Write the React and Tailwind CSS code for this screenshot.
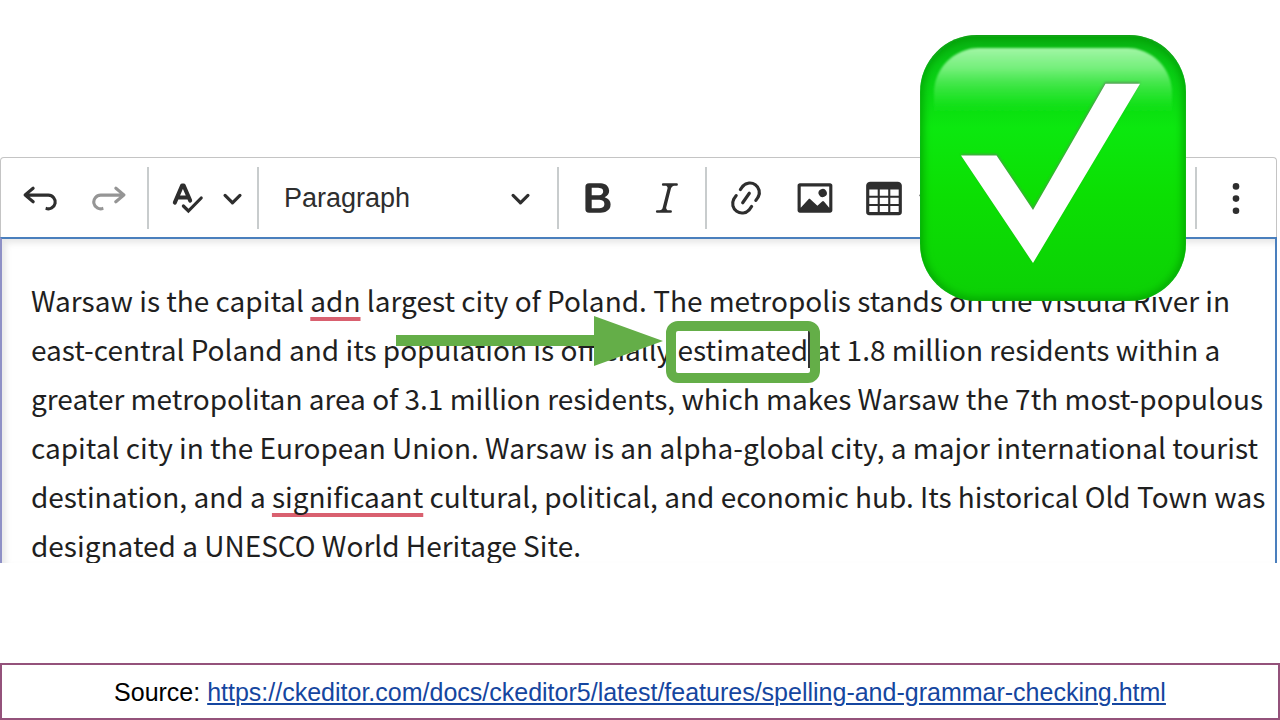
import React from "react";

const PATHS = {
  undo: "m5.042 9.367 2.189 1.837a.75.75 0 0 1-.965 1.149l-3.788-3.18a.747.747 0 0 1-.21-.284.75.75 0 0 1 .17-.945L6.23 4.762a.75.75 0 1 1 .964 1.15L4.863 7.866h8.917A.75.75 0 0 1 14 7.9a4 4 0 1 1-1.477 7.718l.344-1.489a2.5 2.5 0 1 0 1.094-4.73l.008-.032H5.042z",
  bold: "M10.187 17H5.773c-.637 0-1.092-.138-1.364-.415-.273-.277-.409-.718-.409-1.323V4.738c0-.617.14-1.062.419-1.332.279-.27.73-.406 1.354-.406h4.68c.69 0 1.288.041 1.793.124.506.083.96.242 1.36.477.341.197.644.447.906.75a3.262 3.262 0 0 1 .808 2.162c0 1.401-.722 2.426-2.167 3.075C15.05 10.175 16 11.315 16 13.01a3.756 3.756 0 0 1-2.296 3.504 6.1 6.1 0 0 1-1.517.377c-.571.073-1.238.11-2 .11zm-.217-6.217H7v4.087h3.069c1.977 0 2.965-.69 2.965-2.072 0-.707-.256-1.22-.768-1.537-.512-.319-1.277-.478-2.296-.478zM7 5.13v3.619h2.606c.729 0 1.292-.067 1.69-.2a1.6 1.6 0 0 0 .91-.765c.165-.267.247-.566.247-.897 0-.707-.26-1.176-.778-1.409-.519-.232-1.31-.348-2.375-.348H7z",
  italic: "m9.586 14.633.021.004c-.036.335.095.655.393.962.082.083.173.15.274.201h1.474a.6.6 0 1 1 0 1.2H5.304a.6.6 0 0 1 0-1.2h1.15c.474-.07.809-.182 1.005-.334.157-.122.291-.32.404-.597l2.416-9.55a1.053 1.053 0 0 0-.281-.823 1.12 1.12 0 0 0-.442-.296H8.15a.6.6 0 0 1 0-1.2h6.443a.6.6 0 1 1 0 1.2h-1.195c-.376.056-.65.155-.823.296-.215.175-.423.439-.623.79l-2.366 9.347z",
  link: "m11.077 15 .991-1.416a.75.75 0 1 1 1.229.86l-1.148 1.64a.748.748 0 0 1-.217.206 5.251 5.251 0 0 1-8.503-5.955.741.741 0 0 1 .12-.274l1.147-1.639a.75.75 0 1 1 1.228.86L4.933 10.7l.006.003a3.75 3.75 0 0 0 6.132 4.294l.006.004zm5.494-5.335a.748.748 0 0 1-.12.274l-1.147 1.639a.75.75 0 1 1-1.228-.86l.86-1.23a3.75 3.75 0 0 0-6.144-4.301l-.86 1.229a.75.75 0 0 1-1.229-.86l1.148-1.64a.748.748 0 0 1 .217-.206 5.251 5.251 0 0 1 8.503 5.955zm-4.563-2.532a.75.75 0 0 1 .184 1.045l-3.155 4.505a.75.75 0 1 1-1.229-.86l3.155-4.506a.75.75 0 0 1 1.045-.184z",
  image: "M6.91 10.54c.26-.23.64-.21.88.03l3.36 3.14 2.23-2.06a.64.64 0 0 1 .87 0l2.52 2.97V4.5H3.2v10.12l3.71-4.08zm10.27-7.51c.6 0 1.09.47 1.09 1.05v11.84c0 .59-.49 1.06-1.09 1.06H2.79c-.6 0-1.09-.47-1.09-1.06V4.08c0-.58.49-1.05 1.1-1.05h14.38zm-5.22 5.56a1.96 1.96 0 1 1 3.4-1.96 1.96 1.96 0 0 1-3.4 1.96z",
  table: "M3 6v2.9h4V6H3zm0 3.9v2.9h4V9.9H3zm0 3.9v2.9h4v-2.9H3zm5 0v2.9h4v-2.9H8zm5 0v2.9h4v-2.9h-4zm0-3.9v2.9h4V9.9h-4zm0-3.9v2.9h4V6h-4zM8 9.9v2.9h4V9.9H8zM8 6v2.9h4V6H8zM3.5 2.3h13c1 0 2 .7 2 1.7v12.7a1.5 1.5 0 0 1-1.5 1.5H3a1.5 1.5 0 0 1-1.5-1.5V4c0-1 1-1.7 2-1.7z",
};

function Icon({ name, flip }) {
  return (
    <svg viewBox="0 0 20 20" className="size-[42px] shrink-0" fill="currentColor" fillRule="evenodd" aria-hidden="true">
      <path d={PATHS[name]} transform={flip ? "translate(20 0) scale(-1 1)" : undefined} />
    </svg>
  );
}

function Chevron() {
  return (
    <svg viewBox="0 0 10 10" className="size-[21px] shrink-0" fill="currentColor" aria-hidden="true">
      <path d="M.941 4.523a.75.75 0 1 1 1.06-1.06l3.006 3.005 3.005-3.005a.75.75 0 1 1 1.06 1.06l-3.549 3.55a.75.75 0 0 1-1.168-.136L.941 4.523z" />
    </svg>
  );
}

function ToolButton({ label, children, disabled }) {
  return (
    <button
      type="button"
      aria-label={label}
      disabled={disabled}
      className="flex h-full w-[69px] shrink-0 items-center justify-center disabled:opacity-50"
    >
      {children}
    </button>
  );
}

function Separator() {
  return <span className="mx-1 h-[62px] w-[2px] shrink-0 bg-[#c8cccd]" />;
}

function Toolbar() {
  return (
    <div role="toolbar" aria-label="Editor toolbar" className="flex h-[80px] items-center rounded-t-[4px] border border-b-0 border-[#c4c4c4] pl-1 pr-[6px] text-[#2e2e2e]">
      <ToolButton label="Undo"><Icon name="undo" /></ToolButton>
      <ToolButton label="Redo" disabled><Icon name="undo" flip /></ToolButton>
      <Separator />
      <ToolButton label="Spell and grammar check">
        <svg viewBox="0 0 42 42" className="size-[42px]" fill="none" stroke="currentColor" aria-hidden="true">
          <path d="M7.8 25.6 15.2 8.4h1.4l6.6 15.200M11 20.400h10.400" strokeWidth="4" strokeLinecap="round" strokeLinejoin="round" />
          <path d="m16.400 29 5 5 12.800-13" strokeWidth="3.200" strokeLinejoin="miter" strokeLinecap="round" />
        </svg>
      </ToolButton>
      <button type="button" aria-label="Spell check options" className="flex h-full w-[31px] shrink-0 items-center"><Chevron /></button>
      <Separator />
      <div className="relative flex h-full w-[290px] shrink-0 items-center">
        <select aria-label="Heading" className="h-full w-full appearance-none bg-transparent pl-[21px] pt-[2px] font-['Liberation_Sans',sans-serif] text-[27px]">
          <option>Paragraph</option>
        </select>
        <span className="pointer-events-none absolute right-[22px]"><Chevron /></span>
      </div>
      <Separator />
      <ToolButton label="Bold"><Icon name="bold" /></ToolButton>
      <ToolButton label="Italic"><Icon name="italic" /></ToolButton>
      <Separator />
      <ToolButton label="Link"><Icon name="link" /></ToolButton>
      <ToolButton label="Insert image"><Icon name="image" /></ToolButton>
      <ToolButton label="Insert table"><Icon name="table" /></ToolButton>
      <button type="button" aria-label="Table options" className="flex h-full w-[31px] shrink-0 items-center"><Chevron /></button>
      <span className="grow" />
      <Separator />
      <ToolButton label="Show more items">
        <svg viewBox="0 0 42 42" className="size-[42px]" fill="currentColor" aria-hidden="true">
          <circle cx="21" cy="9.4" r="3.3" />
          <circle cx="21" cy="21.6" r="3.3" />
          <circle cx="21" cy="33.800" r="3.3" />
        </svg>
      </ToolButton>
    </div>
  );
}

function Misspelled({ children }) {
  return <span className="underline decoration-[#d9606f] decoration-4 underline-offset-[5px] [text-decoration-skip-ink:none]">{children}</span>;
}

function HighlightedWord({ children }) {
  return (
    <span className="relative inline-block">
      {children}
      <span className="absolute -right-[2px] top-[6px] h-[37px] w-[2px] bg-[#333]" />
      <span className="absolute -left-[12px] -right-[12px] -top-[4px] h-[62px] rounded-[12px] border-[10px] border-[#64ae48]" />
      <svg viewBox="0 0 267 50" className="absolute -top-[9px] right-full mr-[15px] h-[50px] w-[267px] max-w-none" fill="#64ae48" aria-hidden="true">
        <path d="M0 19h198V0l69 25-69 25V30H0z" />
      </svg>
    </span>
  );
}

function CheckMark() {
  return (
    <svg viewBox="0 0 266 266" className="absolute right-[94px] top-[35px] size-[266px]" role="img" aria-label="Correct">
      <defs>
        <linearGradient id="body" x1="0" y1="0" x2="0" y2="1">
          <stop offset="0" stopColor="#08b012" />
          <stop offset="0.12" stopColor="#08cb14" />
          <stop offset="0.35" stopColor="#0ce80f" />
          <stop offset="0.6" stopColor="#0cdf03" />
          <stop offset="1" stopColor="#0cd005" />
        </linearGradient>
        <linearGradient id="gloss" x1="0" y1="0" x2="0" y2="1">
          <stop offset="0" stopColor="#a2f6a6" />
          <stop offset="0.3" stopColor="#80f386" stopOpacity="0.9" />
          <stop offset="0.7" stopColor="#3fee45" stopOpacity="0.5" />
          <stop offset="1" stopColor="#10e814" stopOpacity="0" />
        </linearGradient>
        <filter id="soft" x="-20%" y="-20%" width="140%" height="140%">
          <feGaussianBlur stdDeviation="5" />
        </filter>
        <filter id="edge" x="-5%" y="-5%" width="110%" height="110%">
          <feGaussianBlur stdDeviation="1" />
        </filter>
        <clipPath id="shape">
          <rect width="266" height="266" rx="57" />
        </clipPath>
      </defs>
      <g clipPath="url(#shape)">
        <rect width="266" height="266" fill="url(#body)" />
        <rect x="-2" y="-1" width="270" height="269" rx="59" fill="none" stroke="#079a0a" strokeWidth="8" filter="url(#soft)" />
      </g>
      <path d="M14 82V58a45 45 0 0 1 45-45h148a45 45 0 0 1 45 45v24z" fill="url(#gloss)" filter="url(#edge)" />
      <path d="M41 120h36l36 54 72-126h35L113 227z" fill="#5c8f5c" opacity="0.8" transform="translate(0 -1)" filter="url(#edge)" />
      <path d="M41 120.500h35.500l36.500 54.500 72.500-126.200H220L113 228z" fill="#fff" />
    </svg>
  );
}

export default function App() {
  return (
    <main className="relative flex min-h-screen flex-col overflow-hidden bg-white pt-[157px]">
      <section className="mr-[3px]">
        <Toolbar />
        <div className="h-[326px] overflow-hidden border-x-2 border-t-2 border-[#4a7fbd] border-l-[#8e90c6] pl-[29px] pr-1 pt-[37px] shadow-[inset_4px_4px_6px_#00000018]">
          <p className="font-['Noto_Sans_CJK_SC',sans-serif] text-[28px] leading-[49px] text-[#1f1f1f]">
            Warsaw is the capital <Misspelled>adn</Misspelled> largest city of Poland. The metropolis stands on the Vistula River in
            east-central Poland and its population is officially <HighlightedWord>estimated</HighlightedWord> at 1.8 million residents within a
            greater metropolitan area of 3.1 million residents, which makes Warsaw the 7th most-populous capital city in the European
            Union. Warsaw is an alpha-global city, a major international tourist destination, and a <Misspelled>significaant</Misspelled> cultural,
            political, and economic hub. Its historical Old Town was designated a UNESCO World Heritage Site.
          </p>
        </div>
      </section>
      <CheckMark />
      <footer className="mt-auto flex h-[57px] items-center justify-center border-2 border-[#94527b] pt-[2px] font-['Liberation_Sans',sans-serif] text-[25px] text-black">
        <p>
          Source:{" "}
          <a href="https://ckeditor.com/docs/ckeditor5/latest/features/spelling-and-grammar-checking.html" className="text-[#1546a0] underline decoration-2 underline-offset-2">
            https://ckeditor.com/docs/ckeditor5/latest/features/spelling-and-grammar-checking.html
          </a>
        </p>
      </footer>
    </main>
  );
}
